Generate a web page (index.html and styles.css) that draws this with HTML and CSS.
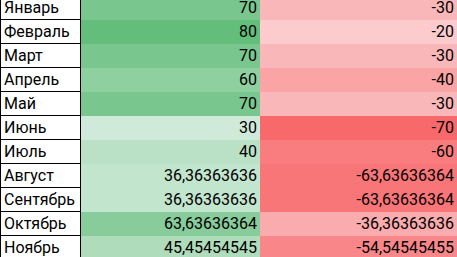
FILE: index.html
```html
<!DOCTYPE html>
<html lang="ru">
<head>
<meta charset="utf-8">
<title>Таблица</title>
<link rel="stylesheet" href="styles.css">
</head>
<body>
<div class="sheet">
  <div class="name">Январь</div><div class="val" style="background:#79c78e">70</div><div class="val" style="background:#fab7ba">-30</div>
  <div class="name">Февраль</div><div class="val" style="background:#63be7b">80</div><div class="val" style="background:#fbcbce">-20</div>
  <div class="name">Март</div><div class="val" style="background:#79c78e">70</div><div class="val" style="background:#fab7ba">-30</div>
  <div class="name">Апрель</div><div class="val" style="background:#8fd0a1">60</div><div class="val" style="background:#faa4a6">-40</div>
  <div class="name">Май</div><div class="val" style="background:#79c78e">70</div><div class="val" style="background:#fab7ba">-30</div>
  <div class="name">Июнь</div><div class="val" style="background:#d0ead9">30</div><div class="val" style="background:#f8696b">-70</div>
  <div class="name">Июль</div><div class="val" style="background:#bae1c6">40</div><div class="val" style="background:#f97d7f">-60</div>
  <div class="name">Август</div><div class="val" style="background:#c2e5cd">36,36363636</div><div class="val" style="background:#f87578">-63,63636364</div>
  <div class="name">Сентябрь</div><div class="val" style="background:#c2e5cd">36,36363636</div><div class="val" style="background:#f87578">-63,63636364</div>
  <div class="name">Октябрь</div><div class="val" style="background:#87cc9a">63,63636364</div><div class="val" style="background:#faabad">-36,36363636</div>
  <div class="name">Ноябрь</div><div class="val" style="background:#afddbc">45,45454545</div><div class="val" style="background:#f9878a">-54,54545455</div>
</div>
</body>
</html>
```
FILE: styles.css
```css
html, body {
  margin: 0;
  padding: 0;
  background: #ffffff;
  overflow: hidden;
}

.sheet {
  display: grid;
  grid-template-columns: 81px 179px 197px;
  grid-auto-rows: 24px;
  margin-top: -4px;
  font-family: Roboto, "Noto Sans", sans-serif;
  font-size: 16px;
  color: #000000;
}

.name,
.val {
  box-sizing: border-box;
  padding-top: 1px;
  line-height: 22px;
  white-space: nowrap;
}

.name {
  border-left: 1px solid #000000;
  border-right: 1px solid #000000;
  border-bottom: 1px solid #000000;
  padding-left: 3px;
  background: #ffffff;
}

.val {
  text-align: right;
  padding-right: 3px;
}
```
